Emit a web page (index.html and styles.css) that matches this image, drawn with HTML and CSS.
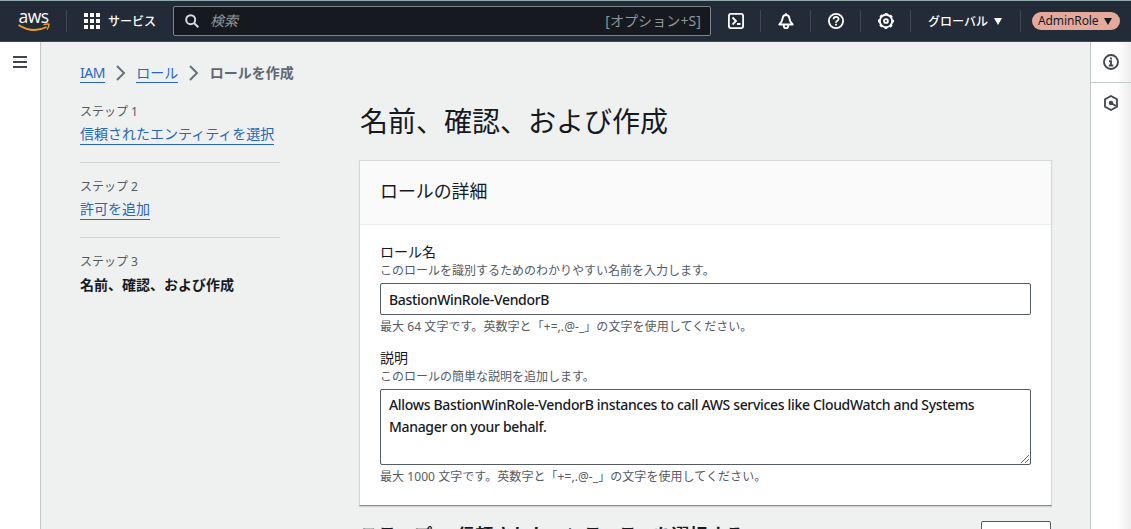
FILE: index.html
```html
<!DOCTYPE html>
<html lang="ja">
<head>
<meta charset="utf-8">
<title>ロールを作成 | IAM</title>
<link rel="stylesheet" href="styles.css">
</head>
<body>
<header class="topbar">
  <div class="brand">
    <span class="brand-name">aws</span>
    <svg class="smile" viewBox="0 0 32 10" width="32" height="10"><path d="M.5 2Q15 11 28.500 4" fill="none" stroke="#f29b28" stroke-width="1.900"/><path d="M25.500 1.600Q29 .6 31 1.200Q31.200 3.500 29 6.500" fill="none" stroke="#f29b28" stroke-width="1.400"/></svg>
  </div>
  <div class="services">
    <svg viewBox="0 0 16 16" width="16" height="16" fill="#fff"><path d="M0 0h4v4H0zM6 0h4v4H6zM12 0h4v4h-4zM0 6h4v4H0zM6 6h4v4H6zM12 6h4v4h-4zM0 12h4v4H0zM6 12h4v4H6zM12 12h4v4h-4z"/></svg>
    <span class="kana services-label">サービス</span>
  </div>
  <div class="search">
    <svg viewBox="0 0 14 14" width="14" height="14" fill="none" stroke="#d5dbdb" stroke-width="2"><circle cx="5.700" cy="5.700" r="4.500"/><path d="M9 9l4.300 4.300"/></svg>
    <span class="search-hint">検索</span>
    <span class="search-key">[オプション+S]</span>
  </div>
  <div class="tool"><svg viewBox="0 0 16 16" width="16" height="16" fill="none" stroke="#fff" stroke-width="1.800"><rect x=".9" y=".9" width="14.200" height="14.200" rx="2"/><path d="M4.500 4.500L8 8l-3.500 3.500M9 11h3.500"/></svg></div>
  <div class="tool"><svg viewBox="0 0 16 16" width="16" height="16" fill="none" stroke="#fff" stroke-width="1.900" stroke-linejoin="round"><path d="M8 .2v2M1.300 11.500h13.400C12.300 9.500 11.800 8.400 11.400 5.300C11.100 3 9.800 2 8 2S4.900 3 4.600 5.300C4.200 8.400 3.700 9.500 1.300 11.500zM5.800 12.500v.6a2.200 2.200 0 0 0 4.400 0v-.6"/></svg></div>
  <div class="tool"><svg viewBox="0 0 16 16" width="16" height="16" fill="none" stroke="#fff" stroke-width="1.800"><circle cx="8" cy="8" r="7.100"/><path d="M5.500 6.300C5.500 3 10.600 3.200 10.600 6C10.600 7.800 8 7.700 8 9.700M8 10.800v1.800"/></svg></div>
  <div class="tool"><svg viewBox="0 0 16 16" width="16" height="16" fill="none" stroke="#fff"><circle cx="8" cy="8" r="6.200" stroke-width="1.900"/><circle cx="8" cy="8" r="7.200" stroke-width="1.600" stroke-dasharray="2.900 2.755" stroke-dashoffset="1.450"/><circle cx="8" cy="8" r="1.900" stroke-width="1.900"/></svg></div>
  <div class="region"><span class="kana">グローバル</span><svg viewBox="0 0 8 7" width="8" height="7"><path d="M0 0h8L4 7z" fill="#fff"/></svg></div>
  <div class="account"><span class="role-pill">AdminRole<svg viewBox="0 0 8 7" width="8" height="7"><path d="M0 0h8L4 7z" fill="#16191f"/></svg></span></div>
</header>
<div class="shell">
  <nav class="left-rail"><svg viewBox="0 0 14 12" width="14" height="12" fill="#414750"><path d="M0 0h14v2H0zM0 5h14v2H0zM0 10h14v2H0z"/></svg></nav>
  <div class="content">
    <div class="crumbs">
      <a class="link iam">IAM</a>
      <svg viewBox="0 0 10 16" width="10" height="16" fill="none" stroke="#687078" stroke-width="2"><path d="M1 1l7 7-7 7"/></svg>
      <a class="link">ロール</a>
      <svg viewBox="0 0 10 16" width="10" height="16" fill="none" stroke="#687078" stroke-width="2"><path d="M1 1l7 7-7 7"/></svg>
      <b>ロールを作成</b>
    </div>
    <div class="columns">
      <ol class="steps">
        <li class="step"><span class="step-number">ステップ 1</span><a class="link">信頼されたエンティティを選択</a></li>
        <li class="step"><span class="step-number">ステップ 2</span><a class="link">許可を追加</a></li>
        <li class="step"><span class="step-number">ステップ 3</span><b>名前、確認、および作成</b></li>
      </ol>
      <main class="main">
        <h1 class="title">名前、確認、および作成</h1>
        <section class="card">
          <h2 class="card-head">ロールの詳細</h2>
          <div class="card-body">
            <div class="label">ロール名</div>
            <div class="note">このロールを識別するためのわかりやすい名前を入力します。</div>
            <div class="field">BastionWinRole-VendorB</div>
            <div class="note limit">最大 64 文字です。英数字と「+=,.@-_」の文字を使用してください。</div>
            <div class="label second">説明</div>
            <div class="note">このロールの簡単な説明を追加します。</div>
            <div class="field area"><span>Allows BastionWinRole-VendorB instances to call AWS services like CloudWatch and Systems<br>Manager on your behalf.</span><svg class="grip" viewBox="0 0 8 8" width="8" height="8" stroke="#555" stroke-width=".9"><path d="M0 8L8 0M4 8l4-4"/></svg></div>
            <div class="note limit">最大 1000 文字です。英数字と「+=,.@-_」の文字を使用してください。</div>
          </div>
        </section>
        <div class="next-section"><h2 class="next-title">ステップ 1: 信頼されたエンティティを選択する</h2><button class="edit">編集</button></div>
      </main>
    </div>
  </div>
  <aside class="right-rail">
    <div class="rail-item"><svg viewBox="0 0 16 16" width="16" height="16" fill="none" stroke="#414750" stroke-width="1.900"><circle cx="8" cy="8" r="7"/><path d="M8 3.500v2M6 7.300h2v4M5.800 11.500h4.500"/></svg></div>
    <div class="rail-item"><svg viewBox="0 0 16 16" width="16" height="16" fill="none" stroke="#414750" stroke-width="1.800"><path d="M8 1l6 3.300v7.400L8 15l-6-3.300V4.300z"/><path d="M8 8l5 3"/><circle cx="8" cy="8" r="1.300" fill="#414750"/></svg></div>
  </aside>
</div>
</body>
</html>
```
FILE: styles.css
```css
* { box-sizing: border-box; }
body { margin: 0; width: 1131px; height: 529px; overflow: hidden; background: #eff1f1; color: #16191f; font: 14px/22px "Noto Sans", "Noto Sans CJK JP", sans-serif; }
svg { display: block; flex: none; }
h1, h2, ol { margin: 0; padding: 0; font-weight: 400; list-style: none; }
b { font-weight: 700; }
.topbar { display: flex; align-items: center; height: 42px; background: #232b38; border-top: 1px solid #8fa9ac; border-bottom: 1px solid #414750; color: #fff; }
.brand { width: 67px; height: 22px; padding-left: 18px; border-right: 1px solid #414750; }
.brand-name { display: block; width: 31px; font: 500 17.500px/12px "Open Sans", sans-serif; letter-spacing: -.5px; text-align: center; }
.smile { margin-top: 1px; }
.services { display: flex; align-items: center; width: 106px; padding-left: 17px; gap: 8px; }
.kana { font-family: "Noto Sans CJK JP", sans-serif; font-weight: 500; white-space: nowrap; }
.services-label { font-size: 12px; line-height: 20px; }
.search { display: flex; align-items: center; width: 538px; height: 30px; padding: 0 9px 0 11px; background: #16191f; border: 1px solid #7c8585; border-radius: 2px; color: #8d9797; }
.search-hint { margin-left: 11px; font-style: italic; }
.search-key { margin-left: auto; letter-spacing: .1px; }
.tool { display: flex; justify-content: center; align-items: center; width: 50px; height: 22px; border-right: 1px solid #414750; }
.region { display: flex; align-items: center; gap: 6px; width: 110px; height: 22px; padding-left: 17px; border-right: 1px solid #414750; font-size: 12px; }
.account { padding-left: 11px; }
.role-pill { display: flex; align-items: center; gap: 6px; width: 88px; height: 18px; padding-left: 6px; border-radius: 9px; background: #e5a99c; color: #16191f; font-size: 12px; letter-spacing: -.1px; }
.shell { display: flex; height: 487px; }
.left-rail { width: 41px; padding: 14px 0 0 13px; background: #fff; border-right: 1px solid #c2c8c8; }
.content { width: 1049px; padding: 20px 38px 0 39px; }
.right-rail { width: 41px; background: linear-gradient(90deg, #fff 65%, #ededed); border-left: 1px solid #c2c8c8; }
.rail-item { display: flex; justify-content: center; align-items: center; height: 41px; }
.rail-item:first-child { border-bottom: 1px solid #c2cccb; }
.rail-item:last-child { height: 40px; }
.link { color: #2a65b8; border-bottom: 1px solid #2a65b8; line-height: 19px; }
.iam { letter-spacing: -.5px; }
.crumbs { display: flex; align-items: center; height: 22px; gap: 10.700px; color: #5f6770; }
.columns { display: flex; gap: 79px; }
.steps { width: 200px; padding-top: 17px; }
.step { height: 75px; }
.step .link, .step b { display: block; width: max-content; }
.step b { line-height: 21px; }
.step .link { line-height: 18px; padding-bottom: 1px; }
.step-number { display: block; height: 23px; color: #545b64; font-size: 12px; line-height: 22px; }
.step:not(:last-child)::after { content: ""; display: block; margin-top: 17px; border-top: 1px solid #d1d5d5; }
.step .link { margin-top: 1px; }
.step:not(:last-child) { padding-top: 0; }
.main { width: 693px; flex: none; padding-top: 18px; }
.title { height: 58px; padding: 1px 0 0 1px; font-size: 28px; line-height: 36px; }
.card { height: 346px; background: #fff; border: 1px solid #d5d9d9; border-bottom-color: #879196; box-shadow: 0 1px 1px #0002; }
.card-head { height: 64px; padding: 17px 20px; background: #fafafa; border-bottom: 1px solid #eaeded; font-size: 17.900px; line-height: 26px; }
.card-body { padding: 16px 20px; }
.label { height: 20px; line-height: 21px; }
.note { height: 18px; color: #545b64; font-size: 12px; line-height: 20px; white-space: nowrap; }
.limit { margin-top: 2px; letter-spacing: .06px; }
.second { margin-top: 12px; }
.field { height: 32px; margin-top: 4px; padding: 5px 8px; border: 1px solid #545b64; border-radius: 2px; background: #fff; font-weight: 500; letter-spacing: -.33px; white-space: nowrap; }
.area { position: relative; height: 76px; padding-top: 4px; }
.grip { position: absolute; right: 1px; bottom: 1px; }
.next-section { display: flex; justify-content: space-between; padding-top: 15px; }
.next-title { padding-left: 1px; font-size: 18px; font-weight: 700; line-height: 28px; letter-spacing: .05px; }
.edit { width: 70px; height: 32px; margin-right: 1px; border: 1px solid #545b64; border-radius: 2px; background: #fff; color: #545b64; font: inherit; }
```
